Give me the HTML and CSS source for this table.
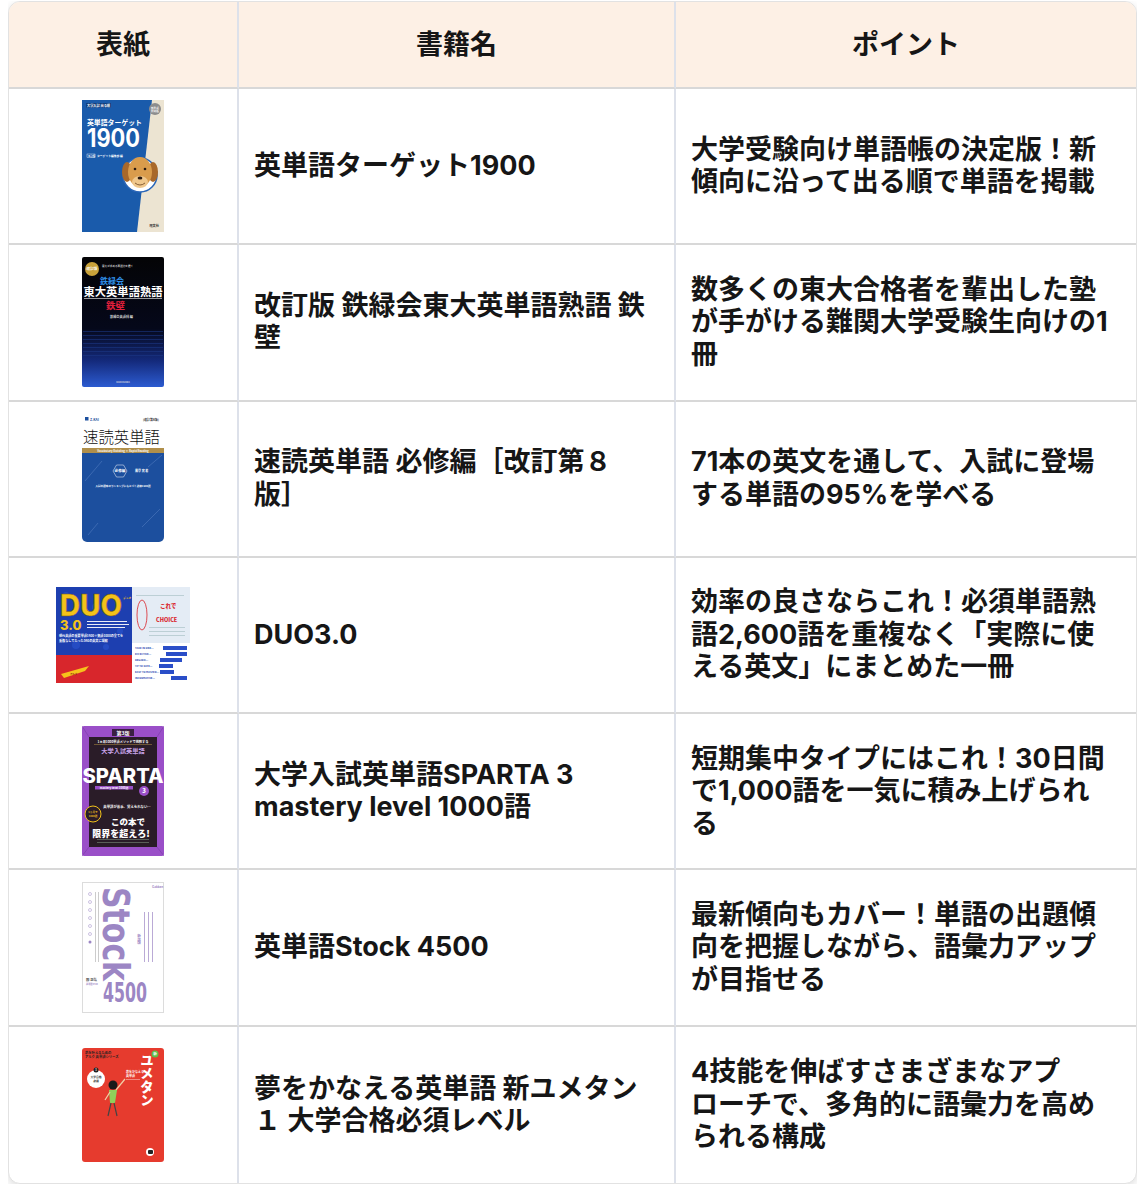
FILE: index.html
```html
<!DOCTYPE html>
<html lang="ja">
<head>
<meta charset="utf-8">
<title>英単語帳 比較</title>
<link rel="stylesheet" href="styles.css">
</head>
<body>
<div class="card">
<table class="books">
<colgroup><col class="col-cover"><col class="col-name"><col class="col-point"></colgroup>
<thead>
<tr><th>表紙</th><th>書籍名</th><th>ポイント</th></tr>
</thead>
<tbody>
<tr>
<td class="cover-cell">
<svg class="cover" width="82" height="132" viewBox="0 0 82 132">
<rect width="82" height="132" fill="#1a5bab"/>
<polygon points="70,0 82,0 82,132 55,132" fill="#ece4d2"/>
<rect x="4" y="3" width="25" height="4.5" fill="#123f7d"/>
<text x="5" y="6.6" font-size="3.2" fill="#fff">大学入試 出る順</text>
<circle cx="73" cy="9" r="6" fill="#8d8d8d"/>
<text x="73" y="8.6" font-size="2.6" fill="#fff" text-anchor="middle">新形式</text>
<text x="73" y="11.6" font-size="2.6" fill="#fff" text-anchor="middle">対応版</text>
<text x="5" y="25" font-size="6.9" font-weight="700" fill="#fff" textLength="55" lengthAdjust="spacingAndGlyphs">英単語ターゲット</text>
<text x="5" y="47" font-size="25" font-weight="700" fill="#fff" font-family="Inter" textLength="53" lengthAdjust="spacingAndGlyphs">1900</text>
<rect x="5" y="54" width="8" height="3.5" fill="none" stroke="#fff" stroke-width=".4"/>
<text x="6" y="56.8" font-size="2.4" fill="#fff">五訂版</text>
<text x="15" y="57" font-size="2.8" fill="#fff">ターゲット編集部 編</text>
<circle cx="58" cy="75" r="17" fill="#fff" stroke="#2a66b8" stroke-width="1.5"/>
<ellipse cx="45" cy="72" rx="5" ry="10" fill="#a8682a"/>
<ellipse cx="71" cy="72" rx="5" ry="10" fill="#a8682a"/>
<ellipse cx="58" cy="72" rx="12" ry="15" fill="#d99c4c"/>
<ellipse cx="58" cy="82" rx="8" ry="6" fill="#efc78c"/>
<ellipse cx="58" cy="78" rx="2.4" ry="1.6" fill="#2a1a10"/>
<circle cx="53" cy="69" r="1.3" fill="#2a1a10"/>
<circle cx="63" cy="69" r="1.3" fill="#2a1a10"/>
<path d="M53 83 Q58 87 63 83" fill="none" stroke="#5a3010" stroke-width=".7"/>
<text x="77" y="127" font-size="3.2" fill="#333" text-anchor="end">旺文社</text>
</svg>
</td>
<td class="name">英単語ターゲット1900</td>
<td class="point">大学受験向け単語帳の決定版！新傾向に沿って出る順で単語を掲載</td>
</tr>
<tr>
<td class="cover-cell">
<svg class="cover" width="82" height="130" viewBox="0 0 82 130">
<defs><linearGradient id="g2" x1="0" y1="0" x2="0" y2="1"><stop offset="0" stop-color="#040406"/><stop offset=".55" stop-color="#05081a"/><stop offset=".8" stop-color="#142a7c"/><stop offset="1" stop-color="#2c5bd0"/></linearGradient></defs>
<rect width="82" height="130" rx="2" fill="url(#g2)"/>
<circle cx="10" cy="12" r="7" fill="#c9a23a"/>
<text x="10" y="13.3" font-size="3.6" font-weight="700" fill="#fff" text-anchor="middle">改訂版</text>
<text x="20" y="10" font-size="2.6" fill="#cfcfcf">東大が求める英語力を磨く</text>
<text x="18" y="26.5" font-size="8" font-weight="700" fill="#2f8fe8">鉄緑会</text>
<text x="1.5" y="39" font-size="11.2" font-weight="700" fill="#fff" textLength="79" lengthAdjust="spacingAndGlyphs">東大英単語熟語</text>
<rect x="2" y="41.2" width="78" height=".6" fill="#fff"/>
<text x="24" y="52" font-size="9.5" font-weight="700" fill="#e3203c">鉄壁</text>
<text x="28" y="61" font-size="3.2" fill="#ddd">鉄緑会英語科 編</text>
<g fill="#1d3a8a" opacity=".7">
<rect x="1" y="74" width="80" height=".8"/><rect x="1" y="78" width="80" height=".8"/><rect x="1" y="82" width="80" height=".8"/><rect x="1" y="86" width="80" height=".8"/><rect x="1" y="90" width="80" height=".8"/><rect x="1" y="94" width="80" height=".8"/><rect x="1" y="98" width="80" height=".8"/>
</g>
<text x="41" y="126" font-size="2.4" fill="#ccd" text-anchor="middle">KADOKAWA</text>
</svg>
</td>
<td class="name">改訂版 鉄緑会東大英単語熟語 鉄壁</td>
<td class="point">数多くの東大合格者を輩出した塾が手がける難関大学受験生向けの1冊</td>
</tr>
<tr>
<td class="cover-cell">
<svg class="cover" width="82" height="127" viewBox="0 0 82 127">
<rect width="82" height="127" fill="#fff"/>
<path d="M0 38 H82 V122 a5 5 0 0 1 -5 5 H5 a5 5 0 0 1 -5 -5 Z" fill="#1c4f9e"/>
<rect y="33" width="82" height="5" fill="#b08f4a"/>
<text x="41" y="36.6" font-size="2.8" fill="#fff" text-anchor="middle">Vocabulary Building × Rapid Reading</text>
<rect x="3" y="2" width="3.5" height="3.5" fill="#1c4f9e"/>
<text x="8" y="5.5" font-size="3.4" fill="#1c4f9e">Z-KAI</text>
<text x="77" y="5.5" font-size="3" fill="#333" text-anchor="end">[改訂第8版]</text>
<text x="1" y="27.5" font-size="15.5" font-weight="300" fill="#111" textLength="77" lengthAdjust="spacingAndGlyphs">速読英単語</text>
<polygon points="31,56 34.5,50 41.5,50 45,56 41.5,62 34.5,62" fill="none" stroke="#fff" stroke-width=".5"/>
<text x="38" y="57.3" font-size="3.6" fill="#fff" text-anchor="middle">必修編</text>
<text x="53" y="57.3" font-size="3" fill="#fff">風早 寛 著</text>
<text x="41" y="72" font-size="2.6" fill="#fff" text-anchor="middle">入試出題率のランキングにもとづく必修1900語</text>
<g stroke="#6a90d0" stroke-width=".4">
<line x1="3" y1="66" x2="20" y2="46"/><line x1="60" y1="112" x2="78" y2="94"/><line x1="66" y1="52" x2="80" y2="40"/><line x1="6" y1="120" x2="16" y2="108"/>
</g>
</svg>
</td>
<td class="name">速読英単語 必修編［改訂第８版］</td>
<td class="point">71本の英文を通して、入試に登場する単語の95%を学べる</td>
</tr>
<tr>
<td class="cover-cell">
<svg class="cover" width="134" height="96" viewBox="0 0 134 96">
<rect width="134" height="96" fill="#fff"/>
<rect width="76" height="68" fill="#1d3fb0"/>
<rect y="68" width="76" height="28" fill="#d8262c"/>
<g fill="#2b55d0" opacity=".6"><circle cx="10" cy="8" r="3"/><circle cx="40" cy="20" r="4"/><circle cx="64" cy="44" r="3"/><circle cx="20" cy="58" r="4"/><circle cx="50" cy="60" r="3"/></g>
<text x="4" y="29" font-size="30" font-weight="800" fill="#f3c21b" stroke="#7a5a08" stroke-width=".5" font-family="Inter" textLength="62" lengthAdjust="spacingAndGlyphs">DUO</text>
<text x="67" y="12" font-size="2.8" fill="#f3c21b">デュオ</text>
<text x="4" y="43" font-size="13" font-weight="800" fill="#f3c21b" font-family="Inter">3.0</text>
<g fill="#fff"><rect x="31" y="34" width="40" height=".9"/><rect x="31" y="37" width="42" height=".9"/><rect x="31" y="40" width="38" height=".9"/></g>
<text x="3" y="50" font-size="3.1" fill="#fff">現代英語の重要単語1600＋熟語1000の全てを</text>
<text x="3" y="55" font-size="3.1" fill="#fff">重複なしでたった560の英文に凝縮</text>
<polygon points="5,87 33,79 29,84 8,91" fill="#f6c21b"/>
<text x="14" y="87.5" font-size="2.4" fill="#7a1010">アルク</text>
<rect x="76" width="58" height="56" fill="#e4ecf5"/>
<ellipse cx="86" cy="28" rx="5" ry="15" fill="none" stroke="#d9262c" stroke-width=".8"/>
<text x="104" y="21" font-size="5.5" font-weight="800" fill="#d9262c">これで</text>
<text x="100" y="35" font-size="5.5" font-weight="800" fill="#d9262c">CHOICE</text>
<g fill="#8aa" opacity=".7"><rect x="93" y="40" width="36" height=".6"/><rect x="93" y="44" width="36" height=".6"/><rect x="93" y="48" width="36" height=".6"/><rect x="80" y="8" width="48" height=".6"/></g>
<g font-size="2.6" fill="#1d3fb0"><text x="79" y="62">TAKE IN ONE...</text><text x="79" y="68">EFFECTIVE...</text><text x="79" y="74">REGARD...</text><text x="79" y="80">UP TO DATE...</text><text x="79" y="86">EASY TO MASTER...</text><text x="79" y="92">INFORMATIVE...</text></g>
<g fill="#2a4ec8"><rect x="107" y="59" width="24" height="4"/><rect x="110" y="65" width="21" height="4"/><rect x="104" y="71" width="22" height="4"/><rect x="103" y="77" width="14" height="4"/><rect x="104" y="83" width="14" height="4"/><rect x="115" y="89" width="16" height="4"/></g>
</svg>
</td>
<td class="name">DUO3.0</td>
<td class="point">効率の良さならこれ！必須単語熟語2,600語を重複なく「実際に使える英文」にまとめた一冊</td>
</tr>
<tr>
<td class="cover-cell">
<svg class="cover" width="82" height="130" viewBox="0 0 82 130">
<rect width="82" height="130" rx="2" fill="#9a4fc8"/>
<polygon points="7,11 75,11 75,121 7,121" fill="#2a1c28"/>
<g stroke="#7a3aa6" stroke-width=".6"><line x1="0" y1="0" x2="7" y2="11"/><line x1="82" y1="0" x2="75" y2="11"/><line x1="0" y1="130" x2="7" y2="121"/><line x1="82" y1="130" x2="75" y2="121"/></g>
<rect x="30" y="3" width="22" height="7" fill="#3a2042"/>
<text x="41" y="8.6" font-size="5" font-weight="700" fill="#fff" text-anchor="middle">第3版</text>
<text x="41" y="17" font-size="3.2" fill="#fff" text-anchor="middle">1ヵ月1000単語メソッドで挑戦する</text>
<rect x="12" y="18.5" width="58" height=".4" fill="#d8b04a"/>
<text x="41" y="27" font-size="6.2" font-weight="700" fill="#c9a4e8" text-anchor="middle">大学入試英単語</text>
<text x="0.5" y="57" font-size="19.5" font-weight="800" fill="#fff" font-family="Inter" textLength="81" lengthAdjust="spacingAndGlyphs">SPARTA</text>
<rect x="13" y="60" width="38" height="3.5" fill="#9a4fc8"/>
<text x="32" y="62.8" font-size="2.8" fill="#fff" text-anchor="middle">mastery level 1000語</text>
<circle cx="62" cy="65" r="5" fill="#9a4fc8"/>
<text x="62" y="67.2" font-size="6" font-weight="800" fill="#fff" text-anchor="middle">3</text>
<circle cx="11" cy="88" r="8" fill="#2a1c28" stroke="#f1c21b" stroke-width="1"/>
<text x="11" y="87" font-size="2.6" fill="#f1c21b" text-anchor="middle">1ヵ月で</text>
<text x="11" y="90.5" font-size="2.6" fill="#f1c21b" text-anchor="middle">1000語</text>
<text x="45" y="82" font-size="3.4" fill="#fff" text-anchor="middle">英単語が苦手、覚えられない…</text>
<text x="46" y="99" font-size="8.5" font-weight="800" fill="#fff" text-anchor="middle">この本で</text>
<text x="39" y="111" font-size="9" font-weight="800" fill="#fff" text-anchor="middle">限界を超えろ!</text>
<g fill="#cfc"><rect x="15" y="113.5" width="52" height=".5" opacity=".6"/><rect x="15" y="116.5" width="52" height=".5" opacity=".6"/></g>
</svg>
</td>
<td class="name">大学入試英単語SPARTA 3 mastery level 1000語</td>
<td class="point">短期集中タイプにはこれ！30日間で1,000語を一気に積み上げられる</td>
</tr>
<tr>
<td class="cover-cell">
<svg class="cover" width="82" height="131" viewBox="0 0 82 131">
<rect x=".5" y=".5" width="81" height="130" fill="#fff" stroke="#dcdcdc"/>
<text transform="translate(21,5) rotate(90)" font-size="38" fill="#9c86c4" font-family="DejaVu Sans Condensed" textLength="94" lengthAdjust="spacingAndGlyphs">Stock</text>
<text x="21" y="120" font-size="26" font-weight="700" fill="#9c86c4" font-family="DejaVu Sans Condensed" textLength="44" lengthAdjust="spacingAndGlyphs">4500</text>
<g fill="none" stroke="#9c86c4" stroke-width=".5"><circle cx="8" cy="12" r="1.5"/><circle cx="8" cy="20" r="1.5"/><circle cx="8" cy="28" r="1.5"/><circle cx="8" cy="36" r="1.5"/><circle cx="8" cy="44" r="1.5"/><circle cx="8" cy="52" r="1.5"/></g>
<circle cx="8" cy="60" r="1.5" fill="#9c86c4"/>
<g fill="#aaa"><rect x="13" y="10" width=".6" height="70"/><rect x="16" y="10" width=".6" height="70"/></g>
<g fill="#9c86c4"><rect x="62" y="30" width=".7" height="50"/><rect x="66" y="30" width=".7" height="50"/><rect x="70" y="30" width=".7" height="50"/></g>
<text x="57" y="52" font-size="3.6" fill="#9c86c4" writing-mode="vertical-rl">新装版</text>
<text x="70" y="6" font-size="3" fill="#9c86c4">Gakken</text>
<text x="4" y="99" font-size="3.4" fill="#555">閲 正弘</text>
<text x="4" y="103" font-size="2.2" fill="#9c86c4">英単語4500</text>
</svg>
</td>
<td class="name">英単語Stock 4500</td>
<td class="point">最新傾向もカバー！単語の出題傾向を把握しながら、語彙力アップが目指せる</td>
</tr>
<tr>
<td class="cover-cell">
<svg class="cover" width="82" height="114" viewBox="0 0 82 114">
<rect width="82" height="114" rx="3" fill="#e63b2e"/>
<text x="3" y="6" font-size="3.3" font-weight="700" fill="#222">夢を叶えるための</text>
<text x="3" y="10" font-size="3.3" font-weight="700" fill="#222">アルク 英単語シリーズ</text>
<circle cx="73" cy="6" r="3.5" fill="#5bbf4a"/>
<text x="73" y="7.3" font-size="3.6" font-weight="700" fill="#fff" text-anchor="middle">新</text>
<text x="65" y="5" font-size="13.5" font-weight="800" fill="#fff" writing-mode="vertical-rl">ユメタン</text>
<text x="44" y="25" font-size="3" fill="#fff">夢をかなえる</text>
<text x="44" y="29" font-size="3" fill="#fff">英単語</text>
<rect x="44" y="31" width="14" height=".4" fill="#fff"/>
<circle cx="14" cy="31" r="9" fill="#fff"/>
<circle cx="14" cy="22" r="2.5" fill="#222"/>
<text x="14" y="23" font-size="2.8" fill="#fff" text-anchor="middle">1</text>
<text x="14" y="30" font-size="2.8" fill="#222" text-anchor="middle">大学合格</text>
<text x="14" y="34" font-size="2.8" fill="#222" text-anchor="middle">必須</text>
<line x1="34" y1="42" x2="43" y2="31" stroke="#f0d0a8" stroke-width="1.2"/>
<polygon points="27,42 35,42 33,55 28,55" fill="#8fcf5a"/>
<line x1="28" y1="44" x2="23" y2="52" stroke="#f0d0a8" stroke-width="1.2"/>
<line x1="29" y1="55" x2="26" y2="68" stroke="#444" stroke-width="1.2"/>
<line x1="32" y1="55" x2="35" y2="68" stroke="#444" stroke-width="1.2"/>
<circle cx="31" cy="37" r="4.5" fill="#1a1a1a"/>
<circle cx="68" cy="104" r="4" fill="#fff"/>
<rect x="66" y="102" width="5" height="4" rx="1" fill="#222"/>
</svg>
</td>
<td class="name">夢をかなえる英単語 新ユメタン１ 大学合格必須レベル</td>
<td class="point">4技能を伸ばすさまざまなアプローチで、多角的に語彙力を高められる構成</td>
</tr>
</tbody>
</table>
</div>
</body>
</html>
```

FILE: styles.css
```css
* { box-sizing: border-box; }

body {
  margin: 1px 8px 0;
  background: #ffffff;
  font-family: "Inter", "Noto Sans CJK JP", sans-serif;
  color: #161616;
}

.card {
  border: 1px solid #e2e2e2;
  border-radius: 12px;
  overflow: hidden;
  background: #ffffff;
  box-shadow: 0 3px 8px rgba(0, 0, 0, 0.13);
}

.books {
  width: 100%;
  border-collapse: separate;
  border-spacing: 0;
  table-layout: fixed;
}

.col-cover { width: 230px; }
.col-name { width: 437px; }

.books th,
.books td {
  border-right: 2px solid #dde1ea;
  border-bottom: 2px solid #d8d8d8;
  font-size: 27px;
  line-height: 1.2;
  font-weight: 700;
  text-spacing-trim: space-all;
  line-break: strict;
}

.books th:last-child,
.books td:last-child { border-right: 0; }

.books tbody tr:last-child td { border-bottom: 0; }

.books th {
  height: 87px;
  padding: 2px 0 0;
  background: #fdf0e5;
  text-align: center;
  vertical-align: middle;
}

.books td {
  height: 156.3px;
  vertical-align: middle;
  text-align: left;
}

.books td.cover-cell {
  padding: 0;
  text-align: center;
  line-height: 0;
}

.cover {
  display: inline-block;
  vertical-align: middle;
  font-family: "Noto Sans CJK JP", sans-serif;
}

.name { padding: 0 16px 0 15px; }

.point { padding: 0 24px 0 15px; }
```
